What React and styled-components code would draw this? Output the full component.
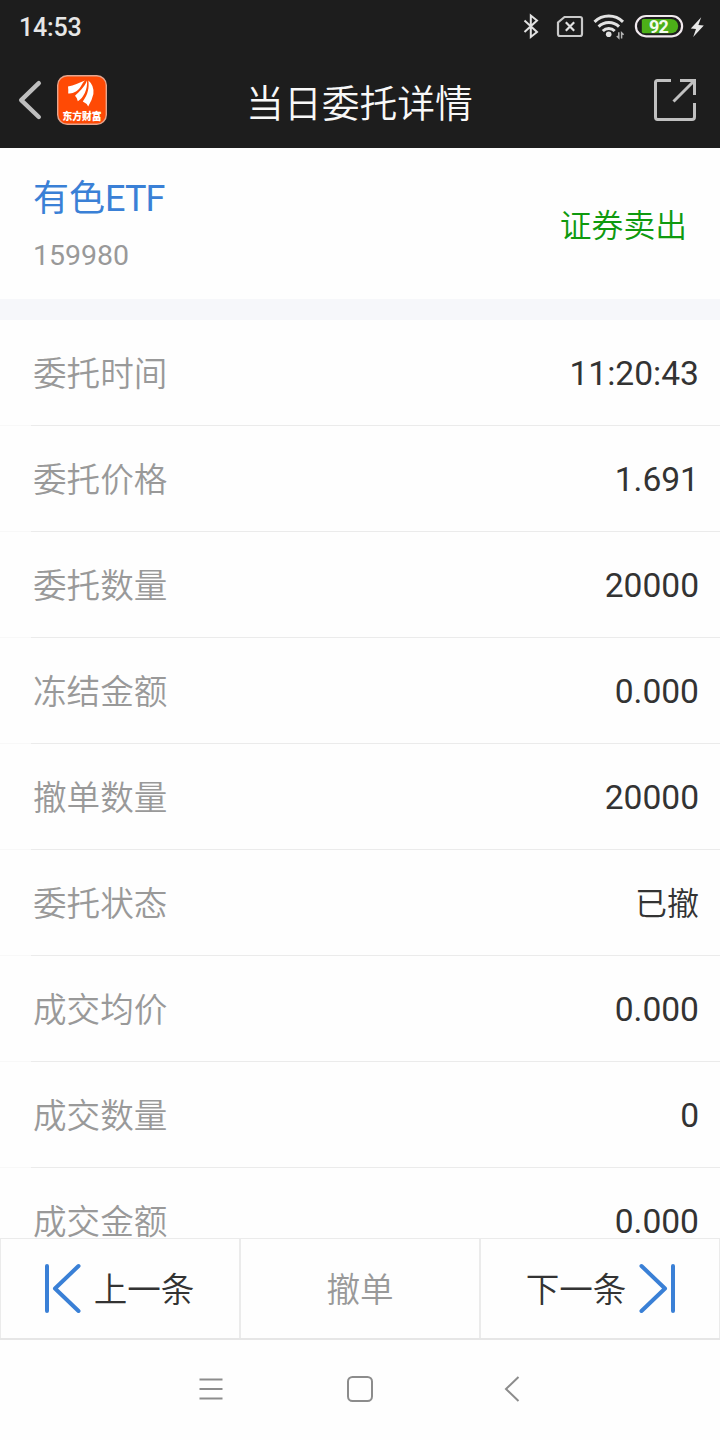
import React from "react";
import styled, { createGlobalStyle } from "styled-components";

const details = [
	{ label: "委托时间", value: "11:20:43" },
	{ label: "委托价格", value: "1.691" },
	{ label: "委托数量", value: "20000" },
	{ label: "冻结金额", value: "0.000" },
	{ label: "撤单数量", value: "20000" },
	{ label: "委托状态", value: "已撤", cjk: true },
	{ label: "成交均价", value: "0.000" },
	{ label: "成交数量", value: "0" },
	{ label: "成交金额", value: "0.000" },
];

const StatusIcons = () => (
	<svg width="190" height="32" viewBox="520 11 190 32" fill="none" stroke="#e2e2e2">
		{/* bluetooth */}
		<path d="M524.5 20.5 L537 32 L530.8 37 V15.5 L537 20.5 L524.5 32" strokeWidth="2" />
		{/* no sim */}
		<path d="M564.5 17 H580 Q582 17 582 19 V34 Q582 36 580 36 H560 Q558 36 558 34 V22.5 Z" strokeWidth="2.2" stroke="#c9c9c9" />
		<path d="M565.8 22.3 L574.2 30.7 M574.2 22.3 L565.8 30.7" strokeWidth="2.2" />
		{/* wifi */}
		<path d="M594.5 21.8 A20.5 20.5 0 0 1 623 21.8" strokeWidth="3" />
		<path d="M598.6 26.6 A14.5 14.5 0 0 1 619 26.6" strokeWidth="3" />
		<path d="M602.8 31 A8.4 8.4 0 0 1 614.7 31" strokeWidth="3" />
		<circle cx="608.7" cy="34.3" r="2.8" fill="#e2e2e2" stroke="none" />
		<path d="M618.8 32.3 V38 L616.8 36 M621.6 38.5 V32.8 L623.6 34.8" strokeWidth="1.5" stroke="#b5b5b5" />
		{/* battery */}
		<rect x="635.9" y="16" width="46.2" height="20.3" rx="10.15" strokeWidth="2.2" stroke="#f1e9ee" />
		<path d="M643.5 18.9 H671 A7.2 7.2 0 0 1 671 33.3 H643.5 Q641.8 33.3 641.8 31.6 V20.6 Q641.8 18.9 643.5 18.9 Z" fill="#4caf18" stroke="none" />
		<BatteryText x="649" y="32.6">92</BatteryText>
		<path d="M701.2 17.2 L690.8 28.4 L696 29 L693.2 37 L703.8 25.6 L698.4 25 Z" fill="#e8e8e8" stroke="none" />
	</svg>
);

const BackIcon = () => (
	<svg width="24" height="42" viewBox="0 0 24 42" fill="none" stroke="#bebebe" strokeWidth="4.4" strokeLinecap="round" strokeLinejoin="round">
		<path d="M20.8 4.2 L3.2 21.2 L20.8 38" />
	</svg>
);

const AppLogo = () => (
	<svg width="50" height="50" viewBox="0 0 50 50">
		<rect x="0.7" y="0.7" width="48.6" height="48.6" rx="9.5" fill="#ff4a05" stroke="#e5a58e" strokeWidth="1.4" />
		<g fill="#fff">
			<path d="M28 5.6 C22 7.6 17 11 11 11.6 Q11.5 15.5 11.2 18.5 Q15 19 19 16.6 C24 13.5 24.5 8.5 28 5.6 Z" />
			<path d="M30 5.4 C27.5 12.5 22 16.5 18 20.8 Q20.3 23 20.8 26.2 C26.5 23 30.8 14 30 5.4 Z" />
			<path d="M31.4 5.6 Q37.3 10.5 36.4 19 Q35 25.5 31.2 31.4 Q29.5 28.3 25.8 26.6 C31 19.5 32.3 13 31.4 5.6 Z" />
		</g>
		<LogoText x="25" y="44.9" textAnchor="middle">东方财富</LogoText>
	</svg>
);

const ShareIcon = () => (
	<svg width="44" height="44" viewBox="0 0 44 44" fill="none" stroke="#c0c0c0" strokeWidth="3">
		<path d="M18 2.5 H4.5 Q2.5 2.5 2.5 4.5 V39 Q2.5 41.5 4.5 41.5 H39 Q41.5 41.5 41.5 39 V25" />
		<path d="M27 2.5 H41.5 V17 M41 3 L20.5 23.5" />
	</svg>
);

const StepIcon = ({ next }) => (
	<StepSvg $next={next} width="38" height="52" viewBox="0 0 38 52">
		<path d="M3 5 V50 M34.5 5 L11 27.5 L34.5 50" />
	</StepSvg>
);

const App = () => {
	return (
		<Screen>
			<GlobalStyle />
			<StatusBar>
				<Clock>14:53</Clock>
				<StatusIcons />
			</StatusBar>

			<TitleBar>
				<TitleSide>
					<BackIcon />
					<AppLogo />
				</TitleSide>
				<Title>当日委托详情</Title>
				<TitleSide $end>
					<ShareIcon />
				</TitleSide>
			</TitleBar>

			<Summary>
				<div>
					<StockName>
						有色<Latin>ETF</Latin>
					</StockName>
					<StockCode>159980</StockCode>
				</div>
				<Direction>证券卖出</Direction>
			</Summary>

			<DetailList>
				{details.map((item) => (
					<DetailRow key={item.label}>
						<Label>{item.label}</Label>
						<Value $cjk={item.cjk}>{item.value}</Value>
					</DetailRow>
				))}
			</DetailList>

			<ActionBar>
				<ActionBtn $side="left">
					<StepIcon />
					上一条
				</ActionBtn>
				<ActionBtn $muted>撤单</ActionBtn>
				<ActionBtn $side="right">
					下一条
					<StepIcon next />
				</ActionBtn>
			</ActionBar>

			<SystemNav>
				<svg width="26" height="28" viewBox="0 0 26 28">
					<path d="M1.5 4.5 H24.5 M1.5 14 H24.5 M1.5 23.5 H24.5" />
				</svg>
				<svg width="28" height="28" viewBox="0 0 28 28">
					<rect x="2" y="2" width="24" height="24" rx="4.5" />
				</svg>
				<svg width="16" height="28" viewBox="0 0 16 28">
					<path d="M14.5 2 L2 14 L14.5 26" />
				</svg>
			</SystemNav>
		</Screen>
	);
};

const GlobalStyle = createGlobalStyle`
	* {
		box-sizing: border-box;
	}
	body {
		margin: 0;
		background-color: #fefefe;
		font-family: Roboto, "Noto Sans CJK SC", sans-serif;
	}
	svg {
		display: block;
		flex-shrink: 0;
	}
`;

const Screen = styled.div`
	width: 720px;
	height: 1440px;
	display: flex;
	flex-direction: column;
	overflow: hidden;
	background-color: #fefefe;
`;

const StatusBar = styled.div`
	height: 54px;
	flex-shrink: 0;
	display: flex;
	align-items: center;
	justify-content: space-between;
	padding: 0 10px 0 19px;
	background-color: #1d1d1d;
`;

const Clock = styled.span`
	font-size: 25px;
	font-weight: 500;
	letter-spacing: -0.2px;
	color: #e6e6e6;
`;

const BatteryText = styled.text`
	font-family: Roboto, sans-serif;
	font-size: 18px;
	font-weight: 700;
	letter-spacing: -0.9px;
	fill: #f4fbef;
	stroke: none;
`;

const LogoText = styled.text`
	font-family: "Noto Sans CJK SC", sans-serif;
	font-size: 9.8px;
	font-weight: 900;
	fill: #fff;
`;

const TitleBar = styled.header`
	height: 94px;
	flex-shrink: 0;
	display: grid;
	grid-template-columns: 1fr auto 1fr;
	align-items: center;
	padding: 0 23px 2px 18px;
	background-color: #1d1d1d;
`;

const TitleSide = styled.div`
	display: flex;
	align-items: center;
	gap: 15px;
	justify-content: ${(props) => (props.$end ? "flex-end" : "flex-start")};
`;

const Title = styled.h1`
	margin: 1px 0 0 4px;
	font-family: "Noto Sans CJK SC", sans-serif;
	font-size: 37.8px;
	line-height: 50px;
	font-weight: 350;
	color: #f8f8f8;
`;

const Summary = styled.section`
	height: 172px;
	flex-shrink: 0;
	display: flex;
	align-items: center;
	justify-content: space-between;
	padding: 0 33px;
	border-bottom: 21px solid #f6f7fa;
`;

const StockName = styled.div`
	margin-top: 8px;
	font-size: 36px;
	line-height: 56px;
	color: #3a80d6;
`;

const Latin = styled.span`
	letter-spacing: -0.9px;
`;

const StockCode = styled.div`
	margin-top: 1px;
	font-size: 28.5px;
	line-height: 56px;
	color: #999;
`;

const Direction = styled.div`
	margin-bottom: 2px;
	font-family: "Noto Sans CJK SC", sans-serif;
	font-size: 31.8px;
	line-height: 40px;
	font-weight: 350;
	color: #0f9a0f;
`;

const DetailList = styled.div`
	flex: 1;
	min-height: 0;
	overflow: hidden;
`;

const DetailRow = styled.div`
	height: 106px;
	display: flex;
	align-items: center;
	justify-content: space-between;
	padding: 0 21px 0 33px;
	border-bottom: 1px solid;
	border-image: linear-gradient(to right, #f8f8f8 32px, #ebebeb 32px) 1;
`;

const Label = styled.span`
	margin-bottom: 2px;
	font-family: "Noto Sans CJK SC", sans-serif;
	font-size: 33.6px;
	line-height: 34px;
	font-weight: 350;
	color: #999;
`;

const Value = styled.span`
	margin-top: 2px;
	font-size: ${(props) => (props.$cjk ? "32px" : "33.6px")};
	line-height: 34px;
	font-weight: ${(props) => (props.$cjk ? 350 : 400)};
	color: #333;
`;

const ActionBar = styled.div`
	height: 102px;
	flex-shrink: 0;
	display: grid;
	grid-template-columns: repeat(3, 1fr);
	border-top: 1px solid #ebebeb;
	border-bottom: 2px solid #e6e6e6;
`;

const ActionBtn = styled.button`
	display: flex;
	align-items: center;
	justify-content: center;
	gap: 12px;
	padding: 0 ${(props) => (props.$side === "left" ? "2px" : "0")} 3px ${(props) => (props.$side === "right" ? "2px" : "0")};
	border: solid #ebebeb;
	border-width: 0 1px;
	background: none;
	font-family: inherit;
	font-size: 33.6px;
	font-weight: 350;
	color: ${(props) => (props.$muted ? "#999" : "#333")};
`;

const StepSvg = styled.svg`
	fill: none;
	stroke: #3a80d6;
	stroke-width: 4;
	stroke-linecap: round;
	stroke-linejoin: round;
	transform: ${(props) => (props.$next ? "scaleX(-1)" : "none")};
`;

const SystemNav = styled.nav`
	height: 100px;
	flex-shrink: 0;
	display: grid;
	grid-template-columns: 26px 28px 16px;
	align-items: center;
	column-gap: 122px;
	padding: 0 0 2px 198px;

	svg {
		fill: none;
		stroke: #8c8c8c;
		stroke-width: 2;
	}

	svg:last-child {
		margin-left: 8px;
	}
`;

export default App;
